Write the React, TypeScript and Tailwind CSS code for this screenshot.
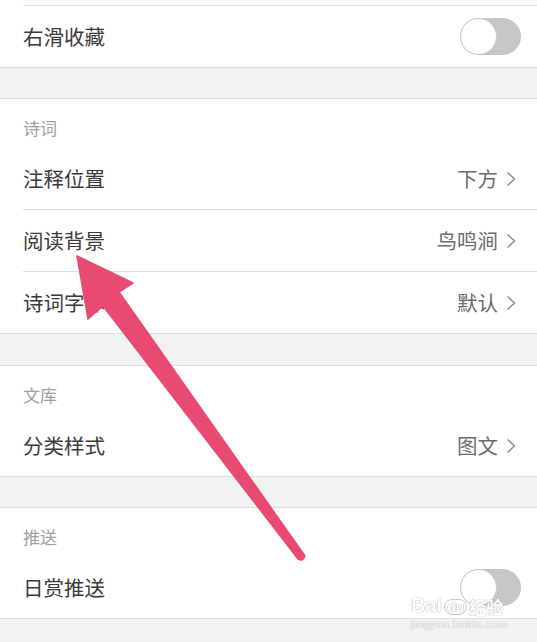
import React from 'react';

const font = { fontFamily: '"Noto Sans CJK SC", "Noto Sans", sans-serif' };

function Chevron() {
  return (
    <svg width="10" height="16" viewBox="0 0 10 16" className="ml-[8px]">
      <path d="M1.5 1.5 L8.5 8 L1.5 14.5" fill="none" stroke="#8a8a8a" strokeWidth="1.4" />
    </svg>
  );
}

function Toggle() {
  return (
    <div className="relative w-[61px] h-[37px] rounded-full bg-[#c6c6c6]">
      <div className="absolute left-0 top-0 w-[37px] h-[37px] rounded-full bg-white border border-[#c9c9c9]" />
    </div>
  );
}

type Row = { label: string; value?: string; toggle?: boolean };

function SettingRow({ row, divider }: { row: Row; divider: boolean }) {
  return (
    <div className="pl-[23px]">
      <div className={`flex items-center justify-between pr-[16px] ${divider ? 'h-[62px] border-b border-[#dcdcdc]' : 'h-[61px]'}`}>
        <span className="text-[20.5px] text-[#3a3a3a]">{row.label}</span>
        {row.toggle ? (
          <Toggle />
        ) : (
          <span className="flex items-center text-[20.5px] text-[#6b6b6b] pr-[5px]">
            {row.value}
            <Chevron />
          </span>
        )}
      </div>
    </div>
  );
}

function Section({ title, rows }: { title: string; rows: Row[] }) {
  return (
    <div className="bg-white border-y border-[#dcdcdc]">
      <div className="h-[49px] pl-[23px] pt-[17px] text-[17px] leading-[24px] text-[#a0a0a0]">{title}</div>
      {rows.map((r, i) => (
        <SettingRow key={r.label} row={r} divider={i < rows.length - 1} />
      ))}
    </div>
  );
}

export default function App() {
  return (
    <div className="relative w-[537px] h-[642px] overflow-hidden bg-[#f2f2f2]" style={font}>
      <div className="bg-white border-b border-[#dcdcdc]">
        <div className="h-[6px] ml-[23px] border-b border-[#e2e2e2]" />
        <div className="pl-[23px]">
          <div className="h-[61px] flex items-center justify-between pr-[16px]">
            <span className="text-[20.5px] text-[#3a3a3a]">右滑收藏</span>
            <Toggle />
          </div>
        </div>
      </div>

      <div className="h-[30px]" />
      <Section
        title="诗词"
        rows={[
          { label: '注释位置', value: '下方' },
          { label: '阅读背景', value: '鸟鸣涧' },
          { label: '诗词字体', value: '默认' },
        ]}
      />
      <div className="h-[31px]" />
      <Section title="文库" rows={[{ label: '分类样式', value: '图文' }]} />
      <div className="h-[30px]" />
      <Section title="推送" rows={[{ label: '日赏推送', toggle: true }]} />

      {/* annotation arrow */}
      <svg className="absolute left-0 top-0 pointer-events-none" width="537" height="642" viewBox="0 0 537 642">
        <path
          d="M77 256 L133 283 L119 292 L305 556 Q303 562 298 559 L103 306 L88 319 Z"
          fill="#e84a70"
          stroke="#e84a70"
          strokeLinejoin="round"
          strokeWidth="1.5"
        />
      </svg>

      {/* watermark */}
      <div className="absolute left-[411px] top-[595px] pointer-events-none leading-none text-white [text-shadow:0_0_1px_#b0b0b0,0_0_1px_#b0b0b0]">
        <div className="flex items-end gap-[2px] text-[20px] font-bold" style={{ fontFamily: '"Liberation Sans", sans-serif' }}>
          <span>Bai</span>
          <span className="text-[14px] border border-[#c8c8c8] rounded-full px-[2px]">du</span>
          <span className="text-[17px]" style={font}>经验</span>
        </div>
        <div className="text-[11px] mt-[4px] tracking-[0.5px]" style={{ fontFamily: '"Liberation Sans", sans-serif' }}>
          jingyan.baidu.com
        </div>
      </div>
    </div>
  );
}
